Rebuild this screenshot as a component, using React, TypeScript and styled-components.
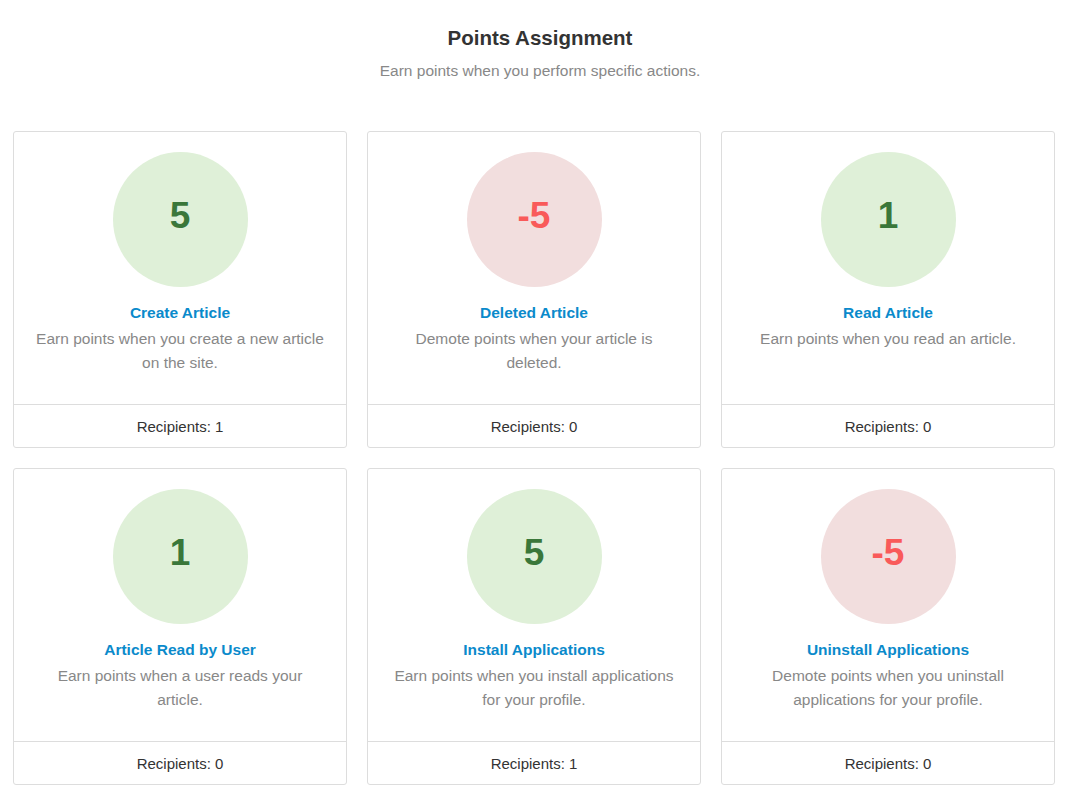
import React from "react";
import styled, { createGlobalStyle } from "styled-components";

const GlobalStyle = createGlobalStyle`
    body {
        margin: 0;
        background: #ffffff;
        font-family: "Liberation Sans", Arial, Helvetica, sans-serif;
    }
`;

const Page = styled.div`
    padding: 26px 16px 10px 13px;
`;

const Header = styled.div`
    text-align: center;
    margin-bottom: 50px;
    padding-left: 12px;
`;

const Title = styled.h1`
    margin: 0;
    font-size: 20.5px;
    line-height: 24px;
    font-weight: bold;
    color: #333333;
`;

const Subtitle = styled.p`
    margin: 11px 0 0;
    font-size: 15.5px;
    line-height: 20px;
    color: #888888;
`;

const Grid = styled.div`
    display: grid;
    grid-template-columns: repeat(3, 1fr);
    gap: 20px;
`;

const Card = styled.div`
    display: flex;
    flex-direction: column;
    border: 1px solid #dddddd;
    border-radius: 3px;
    background: #ffffff;
`;

const CardBody = styled.div`
    flex: 1;
    display: flex;
    flex-direction: column;
    align-items: center;
    padding: 20px 21px 29px;
    text-align: center;
`;

const Badge = styled.div<{ $negative: boolean }>`
    width: 135px;
    height: 135px;
    box-sizing: border-box;
    padding-bottom: 8px;
    border-radius: 50%;
    display: flex;
    align-items: center;
    justify-content: center;
    background: ${(p) => (p.$negative ? "#f2dede" : "#dff0d8")};
    color: ${(p) => (p.$negative ? "#f95a5a" : "#3a773a")};
    font-size: 37px;
    font-weight: bold;
`;

const ActionTitle = styled.div`
    margin-top: 16px;
    font-size: 15.5px;
    line-height: 20px;
    font-weight: bold;
    color: #0a8acb;
`;

const ActionText = styled.div`
    margin-top: 4px;
    font-size: 15.5px;
    line-height: 24px;
    color: #888888;
`;

const CardFooter = styled.div`
    border-top: 1px solid #dddddd;
    height: 42px;
    display: flex;
    align-items: center;
    justify-content: center;
    font-size: 15px;
    color: #333333;
`;

const actions = [
    { points: 5, title: "Create Article", text: "Earn points when you create a new article on the site.", recipients: 1 },
    { points: -5, title: "Deleted Article", text: "Demote points when your article is deleted.", recipients: 0 },
    { points: 1, title: "Read Article", text: "Earn points when you read an article.", recipients: 0 },
    { points: 1, title: "Article Read by User", text: "Earn points when a user reads your article.", recipients: 0 },
    { points: 5, title: "Install Applications", text: "Earn points when you install applications for your profile.", recipients: 1 },
    { points: -5, title: "Uninstall Applications", text: "Demote points when you uninstall applications for your profile.", recipients: 0 },
];

export default function App() {
    return (
        <>
            <GlobalStyle />
            <Page>
                <Header>
                    <Title>Points Assignment</Title>
                    <Subtitle>Earn points when you perform specific actions.</Subtitle>
                </Header>
                <Grid>
                    {actions.map((a, i) => (
                        <Card key={`action-${i}`}>
                            <CardBody>
                                <Badge $negative={a.points < 0}>{a.points}</Badge>
                                <ActionTitle>{a.title}</ActionTitle>
                                <ActionText>{a.text}</ActionText>
                            </CardBody>
                            <CardFooter>Recipients: {a.recipients}</CardFooter>
                        </Card>
                    ))}
                </Grid>
            </Page>
        </>
    );
}
